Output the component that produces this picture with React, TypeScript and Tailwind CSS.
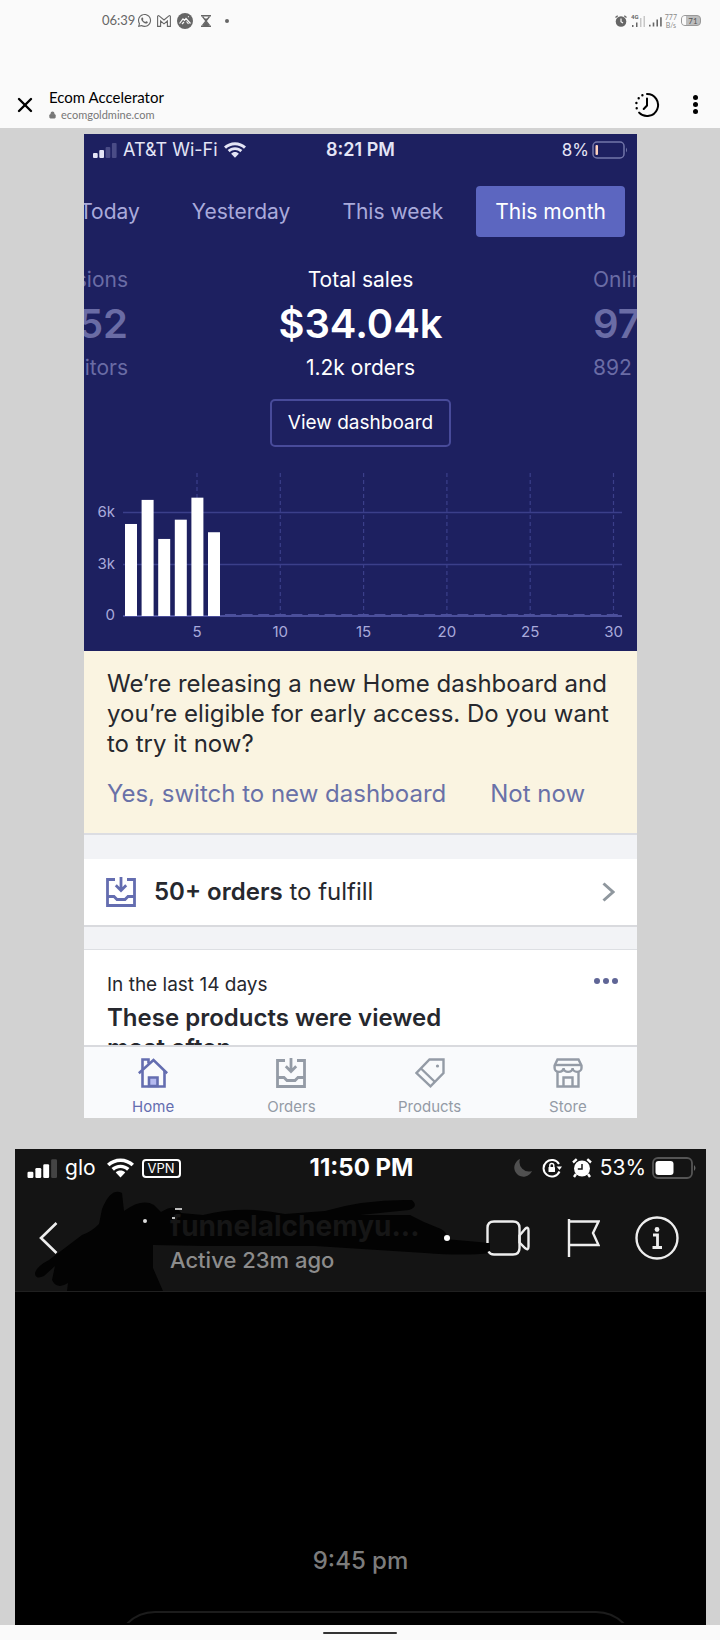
import React from "react";
import { FaWhatsapp } from "react-icons/fa";
import { Lock, X } from "lucide-react";

function Signal({ on, className, dim }: { on: number; className: string; dim: string }) {
  const heights = [5, 8, 11, 15];
  return (
    <svg viewBox="0 0 24 16" className={className} aria-hidden="true">
      {heights.map((h, i) => (
        <rect key={h} x={i * 6.3} y={16 - h} width="4.7" height={h} rx="1" fill={i < on ? "currentColor" : dim} />
      ))}
    </svg>
  );
}

function Wifi({ className }: { className: string }) {
  return (
    <svg viewBox="0 0 24 17" className={className} fill="currentColor" aria-hidden="true">
      <path d="M12 0C7.4 0 3.2 1.8 0 4.7l2.2 2.3C4.800 4.600 8.200 3.200 12 3.200s7.200 1.400 9.800 3.800L24 4.700C20.800 1.800 16.600 0 12 0z" />
      <path d="M12 5.500c-3.100 0-5.900 1.200-8 3.100l2.200 2.300c1.500-1.400 3.600-2.300 5.800-2.300s4.300.9 5.800 2.300L20 8.600c-2.100-1.900-4.900-3.100-8-3.100z" />
      <path d="M12 10.800c-1.600 0-3.100.6-4.200 1.700L12 17l4.200-4.500c-1.100-1.100-2.600-1.700-4.200-1.700z" />
    </svg>
  );
}

function Inbox({ className }: { className: string }) {
  return (
    <svg viewBox="0 0 30 30" className={className} fill="none" stroke="currentColor" strokeWidth="2.800" aria-hidden="true">
      <path d="M9 2.500H1.500v26h27v-26H21" />
      <path d="M1.500 19.500h6.500l3 3h8l3-3h6.500" />
      <path d="M15 0v13M9.800 8.300l5.200 5.200 5.200-5.200" />
    </svg>
  );
}

function AndroidStatus() {
  return (
    <div className="flex h-[41px] items-center pr-[19px] pl-[102px] text-[#666]">
      <span className="text-[13px]">06:39</span>
      <FaWhatsapp className="ml-[2px] h-[15px] w-[15px]" />
      <svg viewBox="0 0 14 12" className="ml-[5px] h-3 w-[14px]" fill="none" stroke="currentColor" strokeWidth="1.100">
        <path d="M.6 11.400V1.200c0-.5.800-.8 1.500-.3L7 5l4.900-4.100c.7-.5 1.500-.2 1.500.3v10.200h-3V6L7 8.800 3.600 6v5.400z" />
      </svg>
      <svg viewBox="0 0 16 16" className="ml-[6px] h-4 w-4">
        <circle cx="8" cy="8" r="8" fill="currentColor" />
        <path d="M2.500 10.500L6 5.800l1.500 1.500L9 5.500l4.500 5M5 11l2-2M9.500 8.500l2 2.500M11 3.500l.8.500" fill="none" stroke="#fafafa" strokeWidth="1.200" />
      </svg>
      <svg viewBox="0 0 10 12" className="ml-2 h-3 w-[10px]">
        <path d="M0 .8h10M0 11.200h10" stroke="currentColor" strokeWidth="1.600" />
        <path d="M1.500 1.500L5 6 1.500 10.500M8.500 1.500L5 6l3.500 4.500" fill="none" stroke="currentColor" strokeWidth="1.300" />
        <path d="M3 3.500h4L5 6zM5 6l3 5H2z" fill="currentColor" />
      </svg>
      <span className="ml-[14px] h-1 w-1 rounded-full bg-[#666]" />
      <div className="ml-auto flex items-center">
        <svg viewBox="0 0 12 12" className="h-3 w-3">
          <circle cx="6" cy="6.500" r="5.300" fill="currentColor" />
          <path d="M.5 2.500L2.700.7M11.500 2.500L9.300.7" stroke="currentColor" strokeWidth="1.300" />
          <path d="M6 3.500v3.200l2 1.300" fill="none" stroke="#fafafa" strokeWidth="1.200" />
        </svg>
        <svg viewBox="0 0 15 14" className="ml-1 h-[14px] w-[15px]" fill="currentColor">
          <text x="0" y="5" fontSize="6" fontWeight="700" fontFamily="Roboto, sans-serif">4G</text>
          <path d="M1 11h1.500v2H1zM5 8.500h1.500V13H5z" />
          <path d="M9 4h1.500v9H9zM12.500 2H14v11h-1.500z" opacity=".35" />
        </svg>
        <svg viewBox="0 0 14 14" className="ml-[3px] h-[14px] w-[13px]" fill="currentColor">
          <path d="M0 11h1.700v2H0zM4 8.500h1.700V13H4zM8 5.500h1.700V13H8zM12 3h1.700v10H12z" />
        </svg>
        <span className="ml-[3px] flex flex-col items-center text-[7px] leading-[8px] text-[#8a8a8a]">
          <span>777</span>
          <span>B/s</span>
        </span>
        <span className="ml-1 flex h-[11px] w-5 items-center justify-center rounded-[4px] border border-[#999] bg-[#bdbdbd] text-[8px] text-[#555]">
          <span className="h-full w-1 rounded-l-[3px] bg-[#fafafa]" />
          <span className="px-[2px]">71</span>
        </span>
      </div>
    </div>
  );
}

function BrowserBar() {
  return (
    <div className="flex items-center pt-[46px] pr-[15px] pb-[6px] pl-[13px] text-black">
      <button aria-label="Close" className="flex h-6 w-6 items-center justify-center">
        <X className="h-6 w-6" strokeWidth={2.400} />
      </button>
      <div className="ml-3">
        <h1 className="text-[15px] leading-5">Ecom Accelerator</h1>
        <a href="#site" className="flex items-center gap-[5px] text-[11px] leading-[15px] text-[#777]">
          <Lock className="h-2 w-[7px] fill-current" strokeWidth={3.500} />
          ecomgoldmine.com
        </a>
      </div>
      <button aria-label="History" className="ml-auto">
        <svg viewBox="0 0 26 26" className="h-[26px] w-[26px]" fill="none" stroke="currentColor" strokeWidth="2" strokeLinecap="round">
          <path d="M13 2a11 11 0 1 1-7.900 18.600" />
          <path d="M13 6.500v7L9.700 17" />
          <path d="M8.400 3.300h.01M4.700 6.200h.01M2.400 11h.01M2.700 16.200h.01" strokeWidth="2.400" />
        </svg>
      </button>
      <button aria-label="More options" className="ml-[25px] flex w-5 flex-col items-center gap-[2px]">
        <span className="h-[5px] w-[5px] rounded-full bg-black" />
        <span className="h-[5px] w-[5px] rounded-full bg-black" />
        <span className="h-[5px] w-[5px] rounded-full bg-black" />
      </button>
    </div>
  );
}

const sales = [5.35, 6.75, 4.48, 5.6, 6.88, 4.87];
const days = [5, 10, 15, 20, 25, 30];

function SalesChart() {
  return (
    <svg viewBox="0 0 553 181" className="block w-full" role="img" aria-label="Sales by day">
      <g stroke="#3b3f8a" strokeWidth="1.500">
        {days.map((d) => (
          <path key={d} d={`M${113 + ((d - 5) / 5) * 83.300} 3V146`} strokeDasharray="4 3" strokeWidth="1.200" />
        ))}
        <path d="M39 42.500h499M39 94.500h499" />
        <path d="M39 146h499" stroke="#4b4f9b" strokeWidth="2" />
        <path d="M141 144.500h397" strokeDasharray="11 5.600" stroke="#4b4f9b" strokeWidth="1" />
      </g>
      {sales.map((v, i) => (
        <rect key={v} x={41 + i * 16.600} y={146 - v * 17.200} width="12" height={v * 17.200} fill="#fff" />
      ))}
      <g fill="#a9aadb" fontSize="15" fontFamily="Inter, sans-serif">
        <text x="31" y="47" textAnchor="end">6k</text>
        <text x="31" y="99" textAnchor="end">3k</text>
        <text x="31" y="150" textAnchor="end">0</text>
        {days.map((d) => (
          <text key={d} x={113 + ((d - 5) / 5) * 83.300} y="167" textAnchor="middle">{d}</text>
        ))}
      </g>
    </svg>
  );
}

function Metric({ title, value, note, className }: { title: string; value: string; note: string; className: string }) {
  return (
    <div className={className}>
      <p className="text-[21px] leading-[44px]">{title}</p>
      <p className="text-[40px] leading-[44px] font-semibold">{value}</p>
      <p className="text-[21px] leading-[44px]">{note}</p>
    </div>
  );
}

function StoreSummary() {
  return (
    <section className="bg-[#1d2060] text-white">
      <div className="grid grid-cols-3 items-center px-[9px] pt-1 text-lg leading-6 text-[#e4e5f6]">
        <div className="flex items-center gap-[6px] whitespace-nowrap">
          <Signal on={2} dim="#4a4c86" className="h-4 w-6" />
          AT&amp;T Wi-Fi
          <Wifi className="h-4 w-[22px]" />
        </div>
        <span className="text-center font-semibold">8:21 PM</span>
        <div className="flex items-center justify-end gap-[3px] pr-[-2px] text-[17px]">
          8%
          <svg viewBox="0 0 36 18" className="h-[18px] w-9">
            <rect x="1" y="1" width="31" height="16" rx="4" fill="none" stroke="#7275a8" strokeWidth="1.500" />
            <rect x="3.500" y="4" width="2.500" height="10" rx="1" fill="#ffd2bd" />
            <path d="M34 6.500q2 2.500 0 5z" fill="#7275a8" />
          </svg>
        </div>
      </div>
      <nav className="mt-6 flex justify-end gap-[14px] overflow-hidden pr-3 text-[21px] whitespace-nowrap text-[#a9aadb]">
        <button className="h-[51px] shrink-0 px-[19px]">Today</button>
        <button className="h-[51px] shrink-0 px-[19px]">Yesterday</button>
        <button className="h-[51px] shrink-0 px-[19px]">This week</button>
        <button className="h-[51px] shrink-0 rounded-[4px] bg-[#5c66c0] px-[19px] text-white">This month</button>
      </nav>
      <div className="mt-[21px] flex justify-between overflow-hidden whitespace-nowrap">
        <div className="flex w-11 justify-end">
          <Metric title="Sessions" value="1,052" note="visitors" className="text-right text-[#6a6ca5]" />
        </div>
        <Metric title="Total sales" value="$34.04k" note="1.2k orders" className="text-center text-white" />
        <div className="w-11">
          <Metric title="Online store" value="97" note="892 orders" className="text-[#6a6ca5]" />
        </div>
      </div>
      <div className="flex justify-center pt-[9px] pb-[23px]">
        <button className="h-12 rounded-[5px] border-2 border-[#484b9a] px-4 text-[19px]">View dashboard</button>
      </div>
      <SalesChart />
    </section>
  );
}

const tabIcons: Record<string, React.ReactNode> = {
  Home: (
    <svg viewBox="0 0 30 30" className="h-[30px] w-[30px]" fill="none" stroke="currentColor" strokeWidth="2.600">
      <path d="M4.500 12.500v16h22v-16" />
      <path d="M.8 15.200L15.500 2 29.200 15.200" />
      <path d="M4.500 11.500V1.500h6v4" />
      <path d="M11 28v-8.500h8.500V28z" fill="#b5baf0" />
    </svg>
  ),
  Orders: <Inbox className="h-[30px] w-[30px]" />,
  Products: (
    <svg viewBox="0 0 30 30" className="h-[30px] w-[30px]" fill="none" stroke="currentColor" strokeWidth="2.400">
      <path d="M14.500 1.500h14v13.500L15.500 28.300 1.500 15z" />
      <path d="M6 10.500l14 13.500" />
      <circle cx="22.500" cy="8" r="1.600" fill="currentColor" stroke="none" />
    </svg>
  ),
  Store: (
    <svg viewBox="0 0 30 30" className="h-[30px] w-[30px]" fill="none" stroke="currentColor" strokeWidth="2.400">
      <path d="M4.500 13.500v15h21v-15M10.500 28.500v-9h9v9" />
      <path d="M4.500 1.500h21l3 6v2.500a4.300 3.700 0 0 1-8.900 0 4.300 3.700 0 0 1-9 0 4.300 3.700 0 0 1-9 0V7.500z" />
      <path d="M2 7h26" />
    </svg>
  ),
};

function StoreFeed() {
  return (
    <div className="bg-[#f2f3f6] text-[#26282e]">
      <section className="border-b-2 border-[#dcdde2] bg-[#faf4e1] px-[23px] pt-[18px] pb-5 text-2xl">
        <p className="leading-[30px]">
          We’re releasing a new Home dashboard and you’re eligible for early access. Do you want to try it now?
        </p>
        <div className="mt-4 flex gap-11 leading-[38px] text-[#6971a8]">
          <button>Yes, switch to new dashboard</button>
          <button>Not now</button>
        </div>
      </section>
      <a href="#orders" className="mt-6 flex h-[68px] items-center border-b-2 border-[#d9dade] bg-white pr-[22px] pl-[22px] text-2xl">
        <Inbox className="h-[30px] w-[30px] text-[#646db0]" />
        <span className="ml-[18px]"><b className="font-semibold">50+ orders</b> to fulfill</span>
        <svg viewBox="0 0 13 20" className="ml-auto h-5 w-[13px]" fill="none" stroke="#8f979e" strokeWidth="3">
          <path d="M1.500 1.500L11 10l-9.500 8.500" />
        </svg>
      </a>
      <section className="mt-[22px] h-24 overflow-hidden border-t border-[#dddfe3] bg-white pr-[19px] pl-[23px] pt-[23px]">
        <div className="flex items-center justify-between">
          <p className="text-[19px] leading-6">In the last 14 days</p>
          <button aria-label="More" className="flex gap-[3px] pb-2">
            <span className="h-[6px] w-[6px] rounded-full bg-[#5f6596]" />
            <span className="h-[6px] w-[6px] rounded-full bg-[#5f6596]" />
            <span className="h-[6px] w-[6px] rounded-full bg-[#5f6596]" />
          </button>
        </div>
        <h2 className="mt-[6px] w-[360px] text-2xl leading-[30px] font-semibold">These products were viewed most often</h2>
      </section>
      <nav className="grid grid-cols-4 border-t-2 border-[#d9dade] bg-[#f9fafc] pt-[11px] pb-px text-[15px] leading-5 text-[#949ba6]">
        {["Home", "Orders", "Products", "Store"].map((name) => (
          <a
            key={name}
            href={`#${name.toLowerCase()}`}
            className={name === "Home" ? "flex flex-col items-center gap-[9px] text-[#646db0]" : "flex flex-col items-center gap-[9px]"}
          >
            {tabIcons[name]}
            {name}
          </a>
        ))}
      </nav>
    </div>
  );
}

function ChatPanel() {
  return (
    <section className="flex grow flex-col bg-black text-white">
      <div className="relative isolate border-b border-[#202020] bg-[#141414] pb-[15px]">
        <svg viewBox="0 0 691 142" className="pointer-events-none absolute inset-0 -z-10 h-full w-full" aria-hidden="true">
          <path
            fill="#030303"
            d="M20 124Q22 117 34 111L67 86Q76 83 84 75L87 60Q96 38 107 44L109 62Q127 49 139 56L146 63Q160 54 166 64L188 66Q228 56 270 65L310 62Q350 50 397 51Q404 58 394 61L345 66 395 66 409 73 426 80Q434 84 430 90L475 94V104Q450 107 410 104L300 97 190 97 138 96 138 119 148 142H52L53 134Q42 141 37 131L40 117 29 127Q20 131 20 124z"
          />
        </svg>
        <div className="grid grid-cols-3 items-center pt-1 pr-[10px] pl-3 text-[21px] leading-[30px]">
          <div className="flex items-center">
            <Signal on={3} dim="#444" className="h-5 w-[31px]" />
            <span className="ml-[7px]">glo</span>
            <Wifi className="ml-[11px] h-5 w-[27px]" />
            <span className="ml-2 rounded-[4px] border-2 border-white px-1 text-[13px] leading-[15px]">VPN</span>
          </div>
          <span className="text-center text-2xl leading-[30px] font-bold">11:50 PM</span>
          <div className="flex items-center justify-end">
            <svg viewBox="0 0 18 18" className="h-[18px] w-[18px]" fill="#505050">
              <path d="M6 0a9.500 9.500 0 0 0 12 12A9.200 9.200 0 1 1 6 0z" />
            </svg>
            <svg viewBox="0 0 20 20" className="ml-[10px] h-5 w-5" fill="none" stroke="#fff" strokeWidth="2">
              <path d="M17 6A8.300 8.300 0 1 0 17.500 13.500" />
              <path d="M14.500 8.500h5.500l-2.500 3.500z" fill="#fff" stroke="none" />
              <rect x="6.500" y="9" width="6.500" height="5" rx=".6" fill="#fff" stroke="none" />
              <path d="M7.800 9V7.500a2 2 0 0 1 4 0V9" strokeWidth="1.400" />
            </svg>
            <svg viewBox="0 0 20 20" className="ml-[10px] h-5 w-5">
              <circle cx="10" cy="10.500" r="8" fill="#fff" />
              <path d="M1 4.500L4.700 1.200M19 4.500L15.300 1.200M4 16l-2 3M16 16l2 3" stroke="#fff" strokeWidth="2.400" />
              <path d="M10 6v5H5.800" fill="none" stroke="#141414" strokeWidth="1.500" />
            </svg>
            <span className="ml-2">53%</span>
            <svg viewBox="0 0 44 22" className="ml-[6px] h-[22px] w-11">
              <rect x="1" y="1" width="39" height="20" rx="5" fill="none" stroke="#555" strokeWidth="1.800" />
              <rect x="3.500" y="4" width="18" height="14" rx="3" fill="#fff" />
              <path d="M42 8q3 3 0 6z" fill="#666" />
            </svg>
          </div>
        </div>
        <div className="flex items-center pt-[17px] pr-[27px] pl-6">
          <button aria-label="Back">
            <svg viewBox="0 0 19 32" className="h-8 w-[19px]" fill="none" stroke="#eee" strokeWidth="2.600">
              <path d="M17.500 1L2 16l15.500 15" />
            </svg>
          </button>
          <div className="relative ml-28 pt-2">
            <h2 className="text-[28px] leading-9 font-bold whitespace-nowrap text-[#161616]">funnelalchemyu...</h2>
            <p className="text-[22px] leading-8 font-medium text-[#8c8c8c]">Active 23m ago</p>
            <svg viewBox="0 0 280 76" className="absolute bottom-0 -left-10 h-[76px] w-[280px]" aria-hidden="true">
              <path d="M45 9h7M42 18h3" stroke="#bbb" strokeWidth="2" />
              <circle cx="15" cy="21" r="2" fill="#ddd" />
            </svg>
          </div>
          <span className="ml-auto h-[6px] w-[6px] rounded-full bg-white" />
          <div className="ml-9 flex items-center">
            <button aria-label="Video call">
              <svg viewBox="0 0 44 36" className="h-9 w-11" fill="none" stroke="#eee" strokeWidth="2.400">
                <path d="M1.500 23V8q0-6.500 6.500-6.500h19q6.500 0 6.500 6.500v20q0 6.500-6.500 6.500H8q-4 0-5.500-3" />
                <path d="M33.500 15.500L39 9q3.500-3 3.500 1.500v16q0 4.500-3.500 1.500l-5.500-5.500z" />
              </svg>
            </button>
            <button aria-label="Flag" className="ml-[37px]">
              <svg viewBox="0 0 33 38" className="h-[38px] w-[33px]" fill="none" stroke="#eee" strokeWidth="2.400">
                <path d="M2 0v38M2 2.500h29.500L26 14l5.500 12H2" />
              </svg>
            </button>
            <button aria-label="Details" className="ml-[35px]">
              <svg viewBox="0 0 44 44" className="h-11 w-11" fill="none" stroke="#eee" strokeWidth="2.400">
                <circle cx="22" cy="22" r="20.500" />
                <circle cx="22" cy="13.500" r="2.400" fill="#eee" stroke="none" />
                <path d="M18 19h4.500v12.500M17.500 31.500h9.500" strokeWidth="2.800" />
              </svg>
            </button>
          </div>
        </div>
      </div>
      <p className="mt-[254px] text-center text-2xl leading-[30px] font-medium text-[#7c7c7c]">9:45 pm</p>
      <div className="mt-[35px] mr-[70px] ml-[100px] h-3 overflow-hidden">
        <div className="h-20 rounded-[40px] border-2 border-[#1c1c1c]" />
      </div>
    </section>
  );
}

export default function App() {
  return (
    <div className="flex min-h-screen flex-col bg-[#d2d2d2] font-['Inter',sans-serif]">
      <header className="bg-[#fafafa] font-['Lato',sans-serif]">
        <AndroidStatus />
        <BrowserBar />
      </header>
      <main className="flex grow flex-col">
        <article className="mt-[6px] mr-[83px] mb-[31px] ml-[84px]">
          <StoreSummary />
          <StoreFeed />
        </article>
        <div className="mr-[14px] ml-[15px] flex grow flex-col">
          <ChatPanel />
        </div>
      </main>
      <footer className="flex h-[15px] items-center justify-center bg-[#fafafa]">
        <span className="h-[2px] w-[74px] rounded-full bg-[#333]" />
      </footer>
    </div>
  );
}
